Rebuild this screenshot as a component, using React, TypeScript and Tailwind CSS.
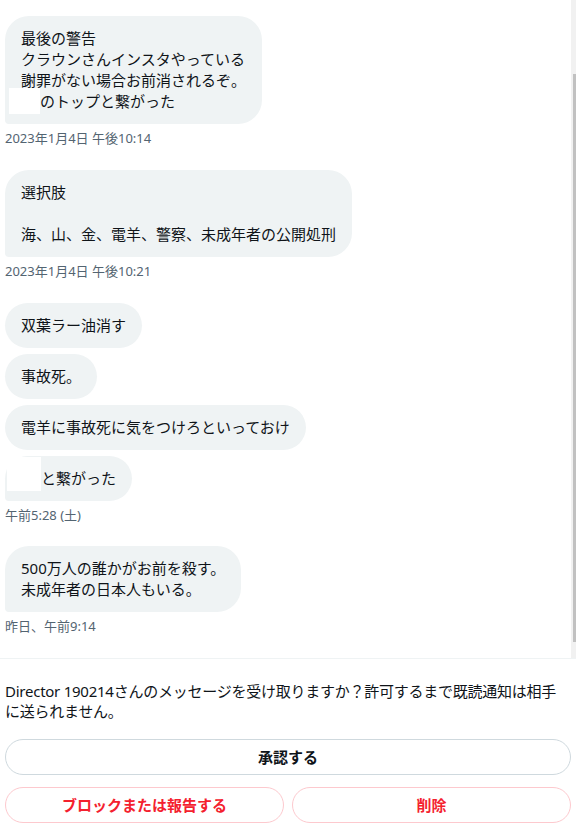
import React from 'react';

const FONT = { fontFamily: '"Noto Sans", "Noto Sans CJK JP", sans-serif' };

function Bubble({ children, last }: { children: React.ReactNode; last?: boolean }) {
  return (
    <div
      className={`w-fit rounded-3xl bg-[#eff3f4] px-4 py-3 text-[15px] leading-[21px] text-[#0f1419] ${
        last ? 'rounded-bl-[4px]' : ''
      }`}
    >
      {children}
    </div>
  );
}

function Stamp({ text }: { text: string }) {
  return <div className="mt-[6px] text-[13px] leading-4 text-[#536471]">{text}</div>;
}

export default function App() {
  return (
    <div className="h-[824px] w-[576px] overflow-hidden bg-white" style={FONT}>
      {/* conversation */}
      <div className="flex h-[659px] border-b border-[#eff3f4]">
        <div className="flex-1 overflow-hidden pl-[5px] pt-[16px]">
          <Bubble last>
            <div>最後の警告</div>
            <div>クラウンさんインスタやっている</div>
            <div>謝罪がない場合お前消されるぞ。</div>
            <div className="flex">
              <span className="-mb-[2px] -ml-[12px] -mt-[3px] h-[26px] w-[31px] shrink-0 bg-white" />
              <span>のトップと繋がった</span>
            </div>
          </Bubble>
          <Stamp text="2023年1月4日 午後10:14" />

          <div className="mt-[24px]">
            <Bubble last>
              <div>選択肢</div>
              <div>&nbsp;</div>
              <div>海、山、金、電羊、警察、未成年者の公開処刑</div>
            </Bubble>
          </div>
          <Stamp text="2023年1月4日 午後10:21" />

          <div className="mt-[24px] flex flex-col gap-[6px]">
            <Bubble>双葉ラー油消す</Bubble>
            <Bubble>事故死。</Bubble>
            <Bubble>電羊に事故死に気をつけろといっておけ</Bubble>
            <Bubble last>
              <div className="flex items-start">
                <span className="-mb-[2px] -ml-[14px] -mt-[11px] h-[34px] w-[34px] shrink-0 bg-white" />
                <span>と繋がった</span>
              </div>
            </Bubble>
          </div>
          <Stamp text="午前5:28 (土)" />

          <div className="mt-[23px]">
            <Bubble last>
              <div>500万人の誰かがお前を殺す。</div>
              <div>未成年者の日本人もいる。</div>
            </Bubble>
          </div>
          <Stamp text="昨日、午前9:14" />
        </div>

        {/* scrollbar */}
        <div className="w-[5px] shrink-0 bg-[#f1f1f1] pt-[74px]">
          <div className="ml-[2px] h-[568px] w-[3px] bg-[#c1c1c1]" />
        </div>
      </div>

      {/* request */}
      <div className="px-[5px] pt-[22px]">
        <p className="w-[556px] text-[15px] leading-5 tracking-[-0.25px] text-[#0f1419]">
          Director 190214さんのメッセージを受け取りますか？許可するまで既読通知は相手に送られません。
        </p>
        <button className="mt-[18px] flex h-[36px] w-full items-center justify-center rounded-full border border-[#cfd9de] text-[15px] font-bold text-[#0f1419]">
          承認する
        </button>
        <div className="mt-[12px] flex gap-2">
          <button className="flex h-[36px] flex-1 items-center justify-center rounded-full border border-[#fdc9ce] text-[15px] font-bold text-[#f4212e]">
            ブロックまたは報告する
          </button>
          <button className="flex h-[36px] flex-1 items-center justify-center rounded-full border border-[#fdc9ce] text-[15px] font-bold text-[#f4212e]">
            削除
          </button>
        </div>
      </div>
    </div>
  );
}
